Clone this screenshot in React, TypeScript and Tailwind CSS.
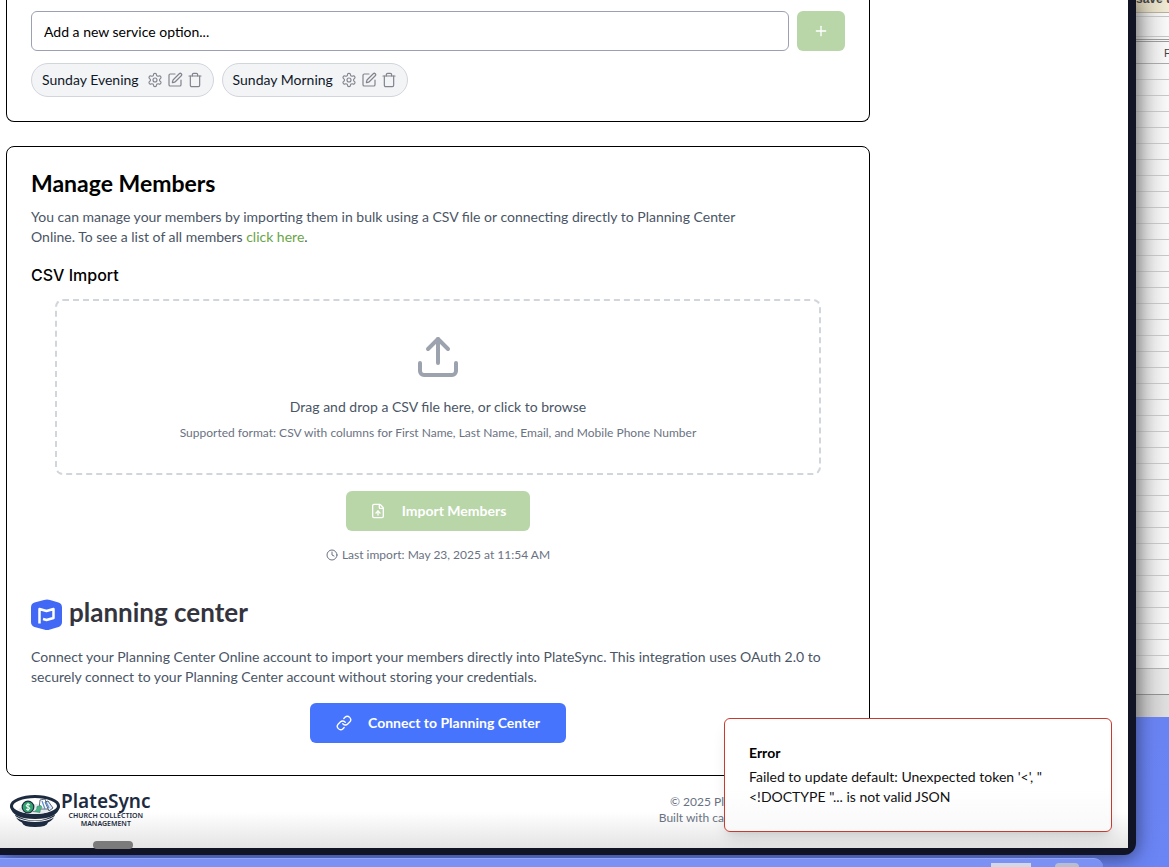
import type { ReactNode } from "react";
import { Clock, FileUp, Link, Plus, SquarePen, Trash, Upload } from "lucide-react";

const services = ["Sunday Evening", "Sunday Morning"];
const sheetRows = Array.from({ length: 37 }, (_, i) => i);

function GearIcon() {
  return (
    <svg viewBox="0 0 24 24" className="size-4" fill="none" stroke="currentColor" strokeWidth="1.7" strokeLinecap="round" strokeLinejoin="round">
      <path d="M12.22 2h-.44a2 2 0 0 0-2 2v.18a2 2 0 0 1-1 1.73l-.43.25a2 2 0 0 1-2 0l-.15-.08a2 2 0 0 0-2.73.73l-.22.38a2 2 0 0 0 .73 2.73l.15.1a2 2 0 0 1 1 1.72v.51a2 2 0 0 1-1 1.74l-.15.09a2 2 0 0 0-.73 2.73l.22.38a2 2 0 0 0 2.73.73l.15-.08a2 2 0 0 1 2 0l.43.25a2 2 0 0 1 1 1.73V20a2 2 0 0 0 2 2h.44a2 2 0 0 0 2-2v-.18a2 2 0 0 1 1-1.73l.43-.25a2 2 0 0 1 2 0l.15.08a2 2 0 0 0 2.73-.73l.22-.39a2 2 0 0 0-.73-2.73l-.15-.08a2 2 0 0 1-1-1.74v-.5a2 2 0 0 1 1-1.74l.15-.09a2 2 0 0 0 .73-2.73l-.22-.38a2 2 0 0 0-2.73-.73l-.15.08a2 2 0 0 1-2 0l-.43-.25a2 2 0 0 1-1-1.73V4a2 2 0 0 0-2-2z" />
      <circle cx="12" cy="12" r="3" />
    </svg>
  );
}

function IconButton({ label, children }: { label: string; children: ReactNode }) {
  return (
    <button type="button" aria-label={label} className="text-[#81848e]">
      {children}
    </button>
  );
}

function ServicePill({ name }: { name: string }) {
  return (
    <li className="flex h-[34px] items-center gap-2 rounded-full border border-gray-300 bg-gray-100 px-[10px] text-sm text-gray-900">
      {name}
      <span className="flex gap-1">
        <IconButton label={`Set ${name} as default`}><GearIcon /></IconButton>
        <IconButton label={`Edit ${name}`}><SquarePen className="size-4" strokeWidth={1.8} /></IconButton>
        <IconButton label={`Delete ${name}`}><Trash className="size-4" strokeWidth={1.8} /></IconButton>
      </span>
    </li>
  );
}

function PlanningCenterLogo() {
  return (
    <div className="flex h-8 items-center gap-[6px]">
      <svg viewBox="0 0 32 32" className="size-8" aria-hidden="true">
        <path d="M13 1Q16 0 19 1L27.500 3.600Q31 4.800 31 8.500V23Q31 26.700 27.500 27.900L19 30.500Q16 31.500 13 30.500L3.500 27.900Q0 26.700 0 23V8.500Q0 4.800 3.500 3.600Z" fill="#4169f5" />
        <path d="M8.500 24.500V10L15.500 12L22.500 10V19L15.500 21L12 20" fill="none" stroke="#fff" strokeWidth="2.5" strokeLinejoin="round" />
      </svg>
      <span className="pb-[6px] text-[26px] leading-8 font-bold text-[#34343e]">planning center</span>
    </div>
  );
}

function PlateSyncLogo() {
  return (
    <div className="flex items-start text-[#1d2b40]">
      <svg viewBox="0 0 52 38" className="mt-[6px] h-[38px] w-[52px]" aria-hidden="true">
        <path d="M6 22.500Q15 28.500 26 28.500T46 22.500Q45 28 39 30.500Q38 35 26 35T13 30.500Q7 28 6 22.500Z" fill="#1d2b40" />
        <path d="M1 14Q3 27 26 27T51 14Z" fill="#1d2b40" />
        <path d="M6 24.500Q14 29.500 26 29.500T46 24.500" fill="none" stroke="#f6f6f6" />
        <ellipse cx="26" cy="14" rx="23.500" ry="9.500" fill="#fff" stroke="#1d2b40" strokeWidth="3" />
        <path d="M9 17.500Q16 12 26 12T43 17.500Q37 22 26 22T9 17.500Z" fill="#e6eaee" />
        <path d="m30 17 1-9 5-1 4 10Z" fill="#fff" stroke="#1d2b40" strokeWidth=".7" />
        <path d="m36 10 3-1 5 7-4 3Z" fill="#dceafa" stroke="#1d2b40" strokeWidth=".7" />
        <path d="m33 9 3 8m1-7 3 6" stroke="#5b8fd0" strokeWidth="1.300" />
        <path d="M24 19.500q4 0 4-5l4-1 1 2q-2 1-2 5Z" fill="#4db389" stroke="#277f59" strokeWidth=".5" />
        <circle cx="19" cy="15" r="5.800" fill="#2fa36e" stroke="#1d2b40" strokeWidth="1.200" />
        <path d="M21.100 13Q19 11.500 17.500 12.800T19 15T20.500 17.100T17 17.200M19 11V19" fill="none" stroke="#fff" />
      </svg>
      <div className="flex flex-col items-center font-['Noto_Sans',sans-serif]">
        <span className="mt-1 text-[19px] leading-[22px] font-semibold">PlateSync</span>
        <span className="text-[7px] leading-[8px] font-semibold">CHURCH COLLECTION</span>
        <span className="text-[7px] leading-[8px] font-semibold">MANAGEMENT</span>
      </div>
    </div>
  );
}

function Spreadsheet() {
  return (
    <div className="h-[717px] overflow-hidden bg-gradient-to-r from-[#d5d5d5] to-[#fafafa] font-['Liberation_Sans',sans-serif] text-[11px] text-[#444]">
      <div className="flex h-[13px] items-start overflow-hidden border-b border-[#b4ae9b] bg-gradient-to-r from-[#d2cab2] to-[#f1ead4]">
        <span className="-mt-2 text-[12px] leading-[14px] font-bold whitespace-nowrap">save th</span>
      </div>
      <div className="mt-[3px] h-[21px] border-y border-[#c2c2c2]" />
      <div className="mt-[2px] h-[3px] border-y border-[#999]" />
      <div className="flex h-[22px] items-center justify-end border-b border-[#a8a8a8] leading-[14px]">
        <span className="w-[5px]">F</span>
      </div>
      {sheetRows.map((row) => (
        <div key={row} className="h-4 border-b border-[#c6c6c6]" />
      ))}
      <div className="h-[13px] border-b border-[#b0b0b0]" />
      <div className="h-[26px] border-b border-[#909090] bg-black/5" />
      <div className="h-[23px] bg-black/10" />
    </div>
  );
}

function Toast() {
  return (
    <div role="alert" className="absolute right-4 bottom-4 w-[388px] rounded-md border border-[#c93a2e] bg-gradient-to-b from-white from-60% to-[#f9f9f9] p-6 text-sm leading-5 text-[#111] shadow-lg">
      <h2 className="font-bold text-black">Error</h2>
      <p className="mt-1">
        Failed to update default: Unexpected token '&lt;', "<br />&lt;!DOCTYPE "... is not valid JSON
      </p>
    </div>
  );
}

export default function App() {
  return (
    <div className="min-h-screen overflow-hidden bg-gradient-to-b from-[#6079e0] to-[#6b85f5] font-[Lato,sans-serif] text-sm leading-5 text-black">
      <div className="flex">
        <div className="z-10 min-w-0 flex-1 rounded-br-xl border-r-8 border-b-[7px] border-[#101424] bg-white shadow-[0_2px_20px_rgba(0,0,0,0.55)]">
          <main className="relative bg-[linear-gradient(to_top,#e4e4e4_0px,#ffffff_36px)] pl-[6px]">
            <section className="max-w-[864px] rounded-b-lg border border-t-0 border-black px-6 pt-[11px] pb-6">
              <form className="flex gap-2">
                <input
                  aria-label="Service option"
                  placeholder="Add a new service option..."
                  className="h-10 min-w-0 flex-1 rounded-md border border-[#9ca0b3] px-3 text-sm placeholder:text-black"
                />
                <button type="button" aria-label="Add service" className="flex h-10 w-12 items-center justify-center rounded-md bg-[#b9d6a9] text-white">
                  <Plus className="size-4" strokeWidth={2} />
                </button>
              </form>
              <ul className="mt-3 flex flex-wrap gap-2">
                {services.map((name) => (
                  <ServicePill key={name} name={name} />
                ))}
              </ul>
            </section>

            <section className="mt-6 max-w-[864px] rounded-lg border border-black px-6 pt-6 pb-8">
              <h1 className="text-[23px] leading-6 font-bold">Manage Members</h1>
              <p className="mt-3 max-w-[720px] text-gray-600">
                You can manage your members by importing them in bulk using a CSV file or connecting directly to Planning Center Online. To see a list of all members{" "}
                <a href="#members" className="text-[#69a548]">click here</a>.
              </p>
              <h2 className="mt-4 font-[Inter,sans-serif] text-base leading-6 font-medium">CSV Import</h2>
              <button type="button" className="mx-6 mt-3 flex h-44 w-[calc(100%-48px)] flex-col items-center rounded-lg border-2 border-dashed border-gray-300 pt-8">
                <Upload className="size-12 text-[#9ca3af]" />
                <span className="mt-4 leading-5 text-gray-600">Drag and drop a CSV file here, or click to browse</span>
                <span className="mt-2 text-xs leading-4 text-gray-500">Supported format: CSV with columns for First Name, Last Name, Email, and Mobile Phone Number</span>
              </button>
              <button type="button" className="mx-auto mt-4 flex h-10 items-center gap-4 rounded-md bg-[#b9d6a9] px-6 font-bold text-white">
                <FileUp className="size-4" />
                Import Members
              </button>
              <p className="mt-4 flex items-center justify-center gap-1 text-xs leading-4 text-gray-500">
                <Clock className="size-3" />
                Last import: May 23, 2025 at 11:54 AM
              </p>
              <div className="mt-9">
                <PlanningCenterLogo />
              </div>
              <p className="mt-4 text-gray-600">
                Connect your Planning Center Online account to import your members directly into PlateSync. This integration uses OAuth 2.0 to securely connect to your Planning Center account without storing your credentials.
              </p>
              <button type="button" className="mx-auto mt-4 flex h-10 min-w-64 items-center justify-center gap-4 rounded-md bg-[#4774fc] px-6 font-bold text-white">
                <Link className="size-4" />
                Connect to Planning Center
              </button>
            </section>

            <footer className="flex h-[72px] max-w-[718px] items-start justify-between pt-[10px] pl-[3px] text-xs leading-4 text-gray-500">
              <PlateSyncLogo />
              <p className="pt-2 text-right">
                © 2025 Pl<br />Built with ca
              </p>
            </footer>
            <div className="absolute -bottom-px left-[93px] h-2 w-10 rounded-full bg-[#7b7b7b]" />
            <Toast />
          </main>
        </div>
        <aside className="w-[33px] shrink-0">
          <Spreadsheet />
        </aside>
      </div>
      <div className="relative z-20 mt-[3px] mr-[66px] flex h-[9px] items-end justify-end gap-6 overflow-hidden rounded-tr-xl border-t border-[#91a3f5] bg-[#7b92f4] pr-6">
        <span className="h-1 w-10 bg-[#d4d8e6]" />
        <span className="h-1 w-6 rounded-t-full bg-[#b8bdd0]" />
      </div>
    </div>
  );
}
